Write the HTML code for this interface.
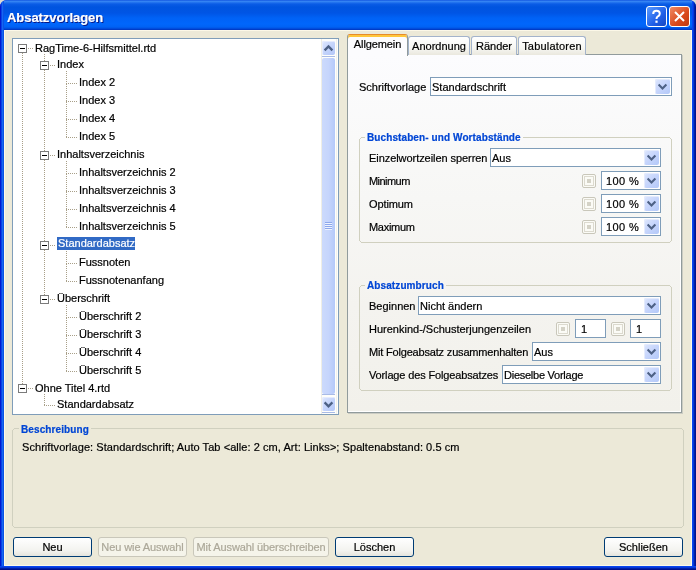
<!DOCTYPE html>
<html><head><meta charset="utf-8"><style>
*{box-sizing:border-box;margin:0;padding:0}
html,body{width:696px;height:570px;overflow:hidden;background:#DCDAD3}
body{position:relative;font-family:"Liberation Sans",sans-serif;font-size:11px;color:#000;-webkit-text-stroke:0.2px currentColor}
div{position:absolute}
#win{will-change:transform;left:0;top:0;width:696px;height:570px;background:#0831D9;border-radius:7px 7px 0 0;overflow:hidden}
#title{left:0;top:0;width:696px;height:30px;background:linear-gradient(#0040D8 0px,#3D8CF6 1px,#2A7AF0 2px,#0A5CE6 4px,#0054DF 7px,#0055E5 13px,#0062F6 18px,#0066FC 24px,#0062F4 27px,#0046D6 29px,#0030B8 30px)}
#ttext{left:7px;top:9px;font-size:13px;font-weight:bold;color:#fff;text-shadow:1px 1px 0 #0A1883;letter-spacing:-0.05px;line-height:17px}
.tb{top:6px;width:21px;height:21px;border:1px solid #fff;border-radius:3px}
#client{left:4px;top:30px;width:688px;height:536px;background:#ECE9D8;border:1px solid #FCF8E8}
#bl{left:0;top:0;width:4px;height:570px;background:linear-gradient(to right,#0019CF 0 1px,#0842E6 1px 2px,#1666F0 2px 3px,#0A52E4 3px 4px)}
#br{left:692px;top:0;width:4px;height:570px;background:linear-gradient(to right,#0845F0 0 1px,#0638DA 1px 2px,#0022A8 2px 3px,#001290 3px 4px)}
#bb{left:0;top:566px;width:696px;height:4px;background:linear-gradient(#0845EE 0 1px,#0638D8 1px 2px,#0020A8 2px 3px,#00108A 3px 4px)}
#tree{left:12px;top:38px;width:327px;height:377px;background:#fff;border:1px solid #7F9DB9}
.vd{width:1px;background:repeating-linear-gradient(to bottom,#A89F88 0 1px,transparent 1px 2px)}
.hd{height:1px;background:repeating-linear-gradient(to right,#A89F88 0 1px,transparent 1px 2px)}
.box{width:9px;height:9px;border:1px solid #7B7B7B;background:#fff}
.box i{position:absolute;left:1px;top:3px;width:5px;height:1px;background:#000}
.ti{height:16px;line-height:16px;white-space:nowrap;padding:0 1px}
.sel{background:#316AC5;color:#fff;height:13px;line-height:13px;top:237px!important;left:57px!important;width:78px;padding:0 1px}
#sb{left:321px;top:39px;width:17px;height:375px;background:#FEFEFB}
.sbb{left:1px;width:13px;height:14px;border-radius:2px;background:linear-gradient(135deg,#DEE7FE,#C3D3FB 55%,#B2C6F8);box-shadow:inset 1px 1px 0 #E6ECFE}
.sbl{left:1px;width:13px;height:1px;background:#A9BBE6}
#thumb{left:1px;top:19px;width:13px;height:336px;border-radius:2px;background:linear-gradient(to right,#CCDAFC,#C6D5FC 50%,#B4C9FA)}
.grip{left:4px;width:7px;height:1px;background:#8DA8EC;box-shadow:0 1px 0 #EEF3FE}
#tabpanel{left:347px;top:54px;width:335px;height:359px;border:1px solid #919B9C;background:linear-gradient(#FCFCFE 0%,#F7F7F5 40%,#F4F3EF 70%,#F2F1EB 100%);box-shadow:inset -1px -1px 0 #fff,1px 1px 0 #CBCCC3}
.tab{top:36px;height:19px;border:1px solid #A3B3CB;border-bottom:none;border-radius:3px 3px 0 0;background:linear-gradient(#FFFFFF,#F7F7F3 60%,#EAE8DE);line-height:18px;text-align:center;white-space:nowrap}
.tab.act{top:34px;height:22px;background:#FCFCFE;border-color:#919B9C;border-top:1px solid #E68B2C;box-shadow:inset 0 2px 0 #FFC73C;z-index:2;line-height:18px}
.lbl{line-height:13px;white-space:nowrap}
.combo{border:1px solid #7F9DB9;background:#fff}
.ct{position:absolute;left:1px;top:3px;line-height:13px;white-space:nowrap}
.cb{right:1px;top:1px;width:15px;height:15px;border-radius:2px;background:linear-gradient(135deg,#DDE6FD 0%,#C6D5FC 50%,#B3C8F8 100%);box-shadow:inset 1px 1px 0 #E4EBFD}
.cb svg{position:absolute;left:0;top:0}
.edit{border:1px solid #7F9DB9;background:#fff}
.chk{width:14px;height:14px;border:1px solid #C9C7BA;border-radius:2px;background:#FBFBF6}
.chk b{position:absolute;left:1px;top:1px;width:10px;height:10px;border:1px solid #DCDACF}
.chk i{position:absolute;left:4px;top:4px;width:4px;height:4px;background:#D4D2C6}
.grp{border:1px solid #D0D0BF;border-radius:4px}
.gt{font-weight:bold;font-size:10px;color:#0046D5;background:#F9F9F7;padding:0 2px;line-height:13px;white-space:nowrap;letter-spacing:0.1px}
.btn{top:537px;height:20px;border:1px solid #003C74;border-radius:3px;background:linear-gradient(#FFFFFF,#F3F3EF 70%,#E5E4DD);text-align:center;line-height:17px;padding-top:1px;white-space:nowrap}
.btn.dis{border-color:#C9C7BA;background:#F5F4EA;color:#ACA899;letter-spacing:-0.1px}
</style></head><body>
<div id="win">
<div id="title"></div><div id="bl"></div><div id="br"></div><div id="bb"></div>
<div id="ttext">Absatzvorlagen</div>
<div class="tb" style="left:646px;background:linear-gradient(135deg,#5A9BFF,#1F5FE8 60%,#1848C0)"><svg width="19" height="19" viewBox="0 0 19 19" style="position:absolute;left:0;top:0"><path d="M6.2 7 Q6.2 3.8 9.5 3.8 Q12.8 3.8 12.8 6.8 Q12.8 8.6 10.6 9.6 Q9.5 10.2 9.5 12" fill="none" stroke="#fff" stroke-width="2"/><rect x="8.4" y="13.6" width="2.2" height="2.2" fill="#fff"/></svg></div>
<div class="tb" style="left:669px;background:linear-gradient(135deg,#F08A64,#D9491C 60%,#C03A10)"><svg width="19" height="19" viewBox="0 0 19 19" style="position:absolute;left:0;top:0"><path d="M5 5 L14 14 M14 5 L5 14" stroke="#fff" stroke-width="2"/></svg></div>
<div id="client"></div>
<div id="tree"></div>
<div class="box" style="left:18px;top:44px"><i></i></div>
<div class="hd" style="left:28px;top:48px;width:6px"></div>
<div class="box" style="left:40px;top:61px"><i></i></div>
<div class="hd" style="left:50px;top:65px;width:6px"></div>
<div class="hd" style="left:66px;top:83px;width:11px"></div>
<div class="hd" style="left:66px;top:101px;width:11px"></div>
<div class="hd" style="left:66px;top:119px;width:11px"></div>
<div class="hd" style="left:66px;top:137px;width:11px"></div>
<div class="box" style="left:40px;top:151px"><i></i></div>
<div class="hd" style="left:50px;top:155px;width:6px"></div>
<div class="hd" style="left:66px;top:173px;width:11px"></div>
<div class="hd" style="left:66px;top:191px;width:11px"></div>
<div class="hd" style="left:66px;top:209px;width:11px"></div>
<div class="hd" style="left:66px;top:227px;width:11px"></div>
<div class="box" style="left:40px;top:241px"><i></i></div>
<div class="hd" style="left:50px;top:245px;width:6px"></div>
<div class="hd" style="left:66px;top:263px;width:11px"></div>
<div class="hd" style="left:66px;top:281px;width:11px"></div>
<div class="box" style="left:40px;top:295px"><i></i></div>
<div class="hd" style="left:50px;top:299px;width:6px"></div>
<div class="hd" style="left:66px;top:317px;width:11px"></div>
<div class="hd" style="left:66px;top:335px;width:11px"></div>
<div class="hd" style="left:66px;top:353px;width:11px"></div>
<div class="hd" style="left:66px;top:371px;width:11px"></div>
<div class="box" style="left:18px;top:384px"><i></i></div>
<div class="hd" style="left:28px;top:388px;width:6px"></div>
<div class="hd" style="left:44px;top:405px;width:11px"></div>
<div class="vd" style="left:44px;top:54px;height:7px"></div>
<div class="vd" style="left:66px;top:71px;height:13px"></div>
<div class="vd" style="left:66px;top:84px;height:18px"></div>
<div class="vd" style="left:66px;top:102px;height:18px"></div>
<div class="vd" style="left:66px;top:120px;height:18px"></div>
<div class="vd" style="left:44px;top:70px;height:81px"></div>
<div class="vd" style="left:66px;top:161px;height:13px"></div>
<div class="vd" style="left:66px;top:174px;height:18px"></div>
<div class="vd" style="left:66px;top:192px;height:18px"></div>
<div class="vd" style="left:66px;top:210px;height:18px"></div>
<div class="vd" style="left:44px;top:160px;height:81px"></div>
<div class="vd" style="left:66px;top:251px;height:13px"></div>
<div class="vd" style="left:66px;top:264px;height:18px"></div>
<div class="vd" style="left:44px;top:250px;height:45px"></div>
<div class="vd" style="left:66px;top:305px;height:13px"></div>
<div class="vd" style="left:66px;top:318px;height:18px"></div>
<div class="vd" style="left:66px;top:336px;height:18px"></div>
<div class="vd" style="left:66px;top:354px;height:18px"></div>
<div class="vd" style="left:22px;top:53px;height:331px"></div>
<div class="vd" style="left:44px;top:394px;height:12px"></div>
<div class="ti" style="left:34px;top:40px">RagTime-6-Hilfsmittel.rtd</div>
<div class="ti" style="left:56px;top:56px">Index</div>
<div class="ti" style="left:78px;top:74px">Index 2</div>
<div class="ti" style="left:78px;top:92px">Index 3</div>
<div class="ti" style="left:78px;top:110px">Index 4</div>
<div class="ti" style="left:78px;top:128px">Index 5</div>
<div class="ti" style="left:56px;top:146px">Inhaltsverzeichnis</div>
<div class="ti" style="left:78px;top:164px">Inhaltsverzeichnis 2</div>
<div class="ti" style="left:78px;top:182px">Inhaltsverzeichnis 3</div>
<div class="ti" style="left:78px;top:200px">Inhaltsverzeichnis 4</div>
<div class="ti" style="left:78px;top:218px">Inhaltsverzeichnis 5</div>
<div class="ti sel" style="left:56px;top:236px">Standardabsatz</div>
<div class="ti" style="left:78px;top:254px">Fussnoten</div>
<div class="ti" style="left:78px;top:272px">Fussnotenanfang</div>
<div class="ti" style="left:56px;top:290px">Überschrift</div>
<div class="ti" style="left:78px;top:308px">Überschrift 2</div>
<div class="ti" style="left:78px;top:326px">Überschrift 3</div>
<div class="ti" style="left:78px;top:344px">Überschrift 4</div>
<div class="ti" style="left:78px;top:362px">Überschrift 5</div>
<div class="ti" style="left:34px;top:380px">Ohne Titel 4.rtd</div>
<div class="ti" style="left:56px;top:396px">Standardabsatz</div>
<div id="sb">
 <div style="left:0;top:0;width:1px;height:375px;background:#EFEEE6"></div>
 <div style="left:15px;top:0;width:1px;height:375px;background:#F3F2EC"></div>
 <div class="sbb" style="top:2px"><svg width="14" height="14" viewBox="0 0 14 14" style="position:absolute;left:0;top:0"><path d="M2.6 9.4 L6.5 5.5 L10.4 9.4" fill="none" stroke="#4D6185" stroke-width="2.3"/></svg></div>
 <div class="sbl" style="top:17px"></div>
 <div id="thumb"></div>
 <div class="sbl" style="top:355px"></div>
 <div class="grip" style="top:183px"></div><div class="grip" style="top:185px"></div><div class="grip" style="top:187px"></div><div class="grip" style="top:189px"></div>
 <div class="sbb" style="top:358px"><svg width="14" height="14" viewBox="0 0 14 14" style="position:absolute;left:0;top:0"><path d="M2.6 5.4 L6.5 9.3 L10.4 5.4" fill="none" stroke="#4D6185" stroke-width="2.3"/></svg></div>
 <div class="sbl" style="top:373px"></div>
</div>
<div id="tabpanel"></div>
<div class="tab act" style="left:347px;width:61px;letter-spacing:-0.1px">Allgemein</div>
<div class="tab" style="left:408px;width:62px">Anordnung</div>
<div class="tab" style="left:471px;width:46px">Ränder</div>
<div class="tab" style="left:518px;width:68px;letter-spacing:0.2px">Tabulatoren</div>
<div class="lbl" style="left:359px;top:81px;">Schriftvorlage</div>
<div class="combo" style="left:430px;top:77px;width:242px;height:19px"><span class="ct">Standardschrift</span><div class="cb"><svg width="15" height="15" viewBox="0 0 15 15"><path d="M3.6 5.6 L7.5 9.5 L11.4 5.6" fill="none" stroke="#4D6185" stroke-width="2.1"/></svg></div></div>
<svg style="position:absolute;left:359px;top:137px" width="313" height="106"><path d="M2.5 0.5 H310.5 L312.5 2.5 V103.5 L310.5 105.5 H2.5 L0.5 103.5 V2.5 Z" fill="none" stroke="#D0D0BF" stroke-width="1" shape-rendering="crispEdges"/></svg>
<div class="gt" style="left:365px;top:131px;background:#F9F9F9">Buchstaben- und Wortabstände</div>
<div class="lbl" style="left:369px;top:152px;letter-spacing:-0.06px">Einzelwortzeilen sperren</div>
<div class="combo" style="left:490px;top:148px;width:171px;height:19px"><span class="ct">Aus</span><div class="cb"><svg width="15" height="15" viewBox="0 0 15 15"><path d="M3.6 5.6 L7.5 9.5 L11.4 5.6" fill="none" stroke="#4D6185" stroke-width="2.1"/></svg></div></div>
<div class="lbl" style="left:369px;top:175px;letter-spacing:-0.55px">Minimum</div>
<div class="chk" style="left:582px;top:174px"><b></b><i></i></div>
<div class="combo" style="left:601px;top:171px;width:60px;height:19px"><span class="ct"><span style="margin-left:3px;letter-spacing:0.4px">100 %</span></span><div class="cb"><svg width="15" height="15" viewBox="0 0 15 15"><path d="M3.6 5.6 L7.5 9.5 L11.4 5.6" fill="none" stroke="#4D6185" stroke-width="2.1"/></svg></div></div>
<div class="lbl" style="left:369px;top:198px;letter-spacing:-0.1px">Optimum</div>
<div class="chk" style="left:582px;top:197px"><b></b><i></i></div>
<div class="combo" style="left:601px;top:194px;width:60px;height:19px"><span class="ct"><span style="margin-left:3px;letter-spacing:0.4px">100 %</span></span><div class="cb"><svg width="15" height="15" viewBox="0 0 15 15"><path d="M3.6 5.6 L7.5 9.5 L11.4 5.6" fill="none" stroke="#4D6185" stroke-width="2.1"/></svg></div></div>
<div class="lbl" style="left:369px;top:221px;letter-spacing:-0.3px">Maximum</div>
<div class="chk" style="left:582px;top:220px"><b></b><i></i></div>
<div class="combo" style="left:601px;top:217px;width:60px;height:19px"><span class="ct"><span style="margin-left:3px;letter-spacing:0.4px">100 %</span></span><div class="cb"><svg width="15" height="15" viewBox="0 0 15 15"><path d="M3.6 5.6 L7.5 9.5 L11.4 5.6" fill="none" stroke="#4D6185" stroke-width="2.1"/></svg></div></div>
<svg style="position:absolute;left:359px;top:285px" width="313" height="106"><path d="M2.5 0.5 H310.5 L312.5 2.5 V103.5 L310.5 105.5 H2.5 L0.5 103.5 V2.5 Z" fill="none" stroke="#D0D0BF" stroke-width="1" shape-rendering="crispEdges"/></svg>
<div class="gt" style="left:365px;top:279px;background:#F5F4F1">Absatzumbruch</div>
<div class="lbl" style="left:369px;top:300px;">Beginnen</div>
<div class="combo" style="left:418px;top:296px;width:243px;height:19px"><span class="ct">Nicht ändern</span><div class="cb"><svg width="15" height="15" viewBox="0 0 15 15"><path d="M3.6 5.6 L7.5 9.5 L11.4 5.6" fill="none" stroke="#4D6185" stroke-width="2.1"/></svg></div></div>
<div class="lbl" style="left:369px;top:323px;">Hurenkind-/Schusterjungenzeilen</div>
<div class="chk" style="left:556px;top:322px"><b></b><i></i></div>
<div class="edit" style="left:575px;top:319px;width:31px;height:19px"><span class="ct"><span style="margin-left:4px">1</span></span></div>
<div class="chk" style="left:611px;top:322px"><b></b><i></i></div>
<div class="edit" style="left:630px;top:319px;width:31px;height:19px"><span class="ct"><span style="margin-left:4px">1</span></span></div>
<div class="lbl" style="left:369px;top:346px;letter-spacing:-0.18px">Mit Folgeabsatz zusammenhalten</div>
<div class="combo" style="left:532px;top:342px;width:129px;height:19px"><span class="ct">Aus</span><div class="cb"><svg width="15" height="15" viewBox="0 0 15 15"><path d="M3.6 5.6 L7.5 9.5 L11.4 5.6" fill="none" stroke="#4D6185" stroke-width="2.1"/></svg></div></div>
<div class="lbl" style="left:369px;top:369px;letter-spacing:-0.14px">Vorlage des Folgeabsatzes</div>
<div class="combo" style="left:502px;top:365px;width:159px;height:19px"><span class="ct"><span style="letter-spacing:-0.25px">Dieselbe Vorlage</span></span><div class="cb"><svg width="15" height="15" viewBox="0 0 15 15"><path d="M3.6 5.6 L7.5 9.5 L11.4 5.6" fill="none" stroke="#4D6185" stroke-width="2.1"/></svg></div></div>
<svg style="position:absolute;left:12px;top:428px" width="672" height="100"><path d="M2.5 0.5 H669.5 L671.5 2.5 V97.5 L669.5 99.5 H2.5 L0.5 97.5 V2.5 Z" fill="none" stroke="#D0D0BF" stroke-width="1" shape-rendering="crispEdges"/></svg>
<div class="gt" style="left:19px;top:423px;background:#ECE9D8">Beschreibung</div>
<div class="lbl" style="left:22px;top:441px;letter-spacing:0.06px">Schriftvorlage: Standardschrift; Auto Tab &lt;alle: 2 cm, Art: Links&gt;; Spaltenabstand: 0.5 cm</div>
<div class="btn" style="left:13px;width:79px">Neu</div>
<div class="btn dis" style="left:98px;width:89px">Neu wie Auswahl</div>
<div class="btn dis" style="left:193px;width:136px">Mit Auswahl überschreiben</div>
<div class="btn" style="left:335px;width:79px">Löschen</div>
<div class="btn" style="left:604px;width:79px">Schließen</div>
</div>
</body></html>
